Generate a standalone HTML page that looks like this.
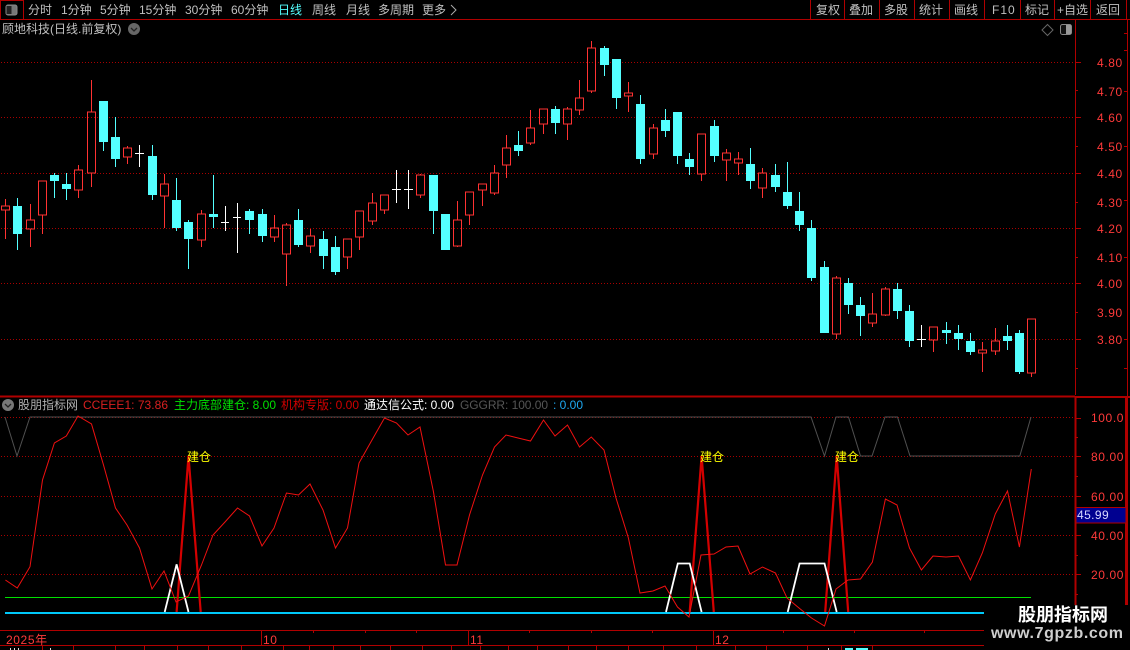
<!DOCTYPE html>
<html lang="zh">
<head>
<meta charset="utf-8">
<title>顾地科技</title>
<style>
html,body{margin:0;padding:0;background:#000;width:1130px;height:650px;overflow:hidden}
svg{display:block;position:absolute;left:0;top:0}
text{font-family:"Liberation Sans","WenQuanYi Zen Hei","Noto Sans CJK SC",sans-serif;font-size:12px}
.m text{fill:#c0c0c0}
.a text{fill:#ff3a3a;letter-spacing:.6px}
</style>
</head>
<body>
<svg width="1130" height="650" viewBox="0 0 1130 650" xmlns="http://www.w3.org/2000/svg">
<!-- frame lines -->
<g fill="none" stroke="#b00000" shape-rendering="crispEdges">
<path d="M0 19.5H1130M23.5 0V19M810.5 0V19M844.5 0V19M879.5 0V19M914.5 0V19M949.5 0V19M984.5 0V19M1020.5 0V19M1054.5 0V19M1090.5 0V19M1126.5 0V19"/>
<path d="M1075.5 20V395M1127.5 20V610"/>
<path d="M0 630.5H984M0 645.5H984M261.5 631V645M468.5 631V645M713.5 631V645"/>
<path d="M42.5 646V650M73.5 646V650M115.5 646V650M144.5 646V650M177.5 646V650M208.5 646V650M241.5 646V650M283.5 646V650M309.5 646V650M333.5 646V650M360.5 646V650M390.5 646V650M422.5 646V650M451.5 646V650M480.5 646V650M508.5 646V650M537.5 646V650M568.5 646V650M596.5 646V650M628.5 646V650M663.5 646V650M696.5 646V650M735.5 646V650M766.5 646V650M807.5 646V650M841.5 646V650M872.5 646V650"/>
<path d="M313.5 630V633M365.5 630V633M416.5 630V633M529.5 630V633M591.5 630V633M652.5 630V633M783.5 630V633M854.5 630V633M924.5 630V633"/>
<path d="M1075 62.5H1081M1075 90.5H1078M1075 117.5H1081M1075 146.5H1078M1075 173.5H1081M1075 202.5H1078M1075 228.5H1081M1075 257.5H1078M1075 283.5H1081M1075 312.5H1078M1075 339.5H1081M1075 368.5H1078M1075 418.5H1081M1075 437.5H1078M1075 456.5H1081M1075 476.5H1078M1075 496.5H1081M1075 535.5H1081M1075 555.5H1078M1075 574.5H1081M1075 594.5H1078"/>
<path d="M1124 33.5H1127M1124 50.5H1127M1124 91.5H1127M1124 146.5H1127M1124 200.5H1127M1124 257.5H1127M1124 339.5H1127M1124 368.5H1127"/>
</g>
<path d="M0 396.5H1075M1075 397H1130M1075.5 397V612M1126 397V612" fill="none" stroke="#b00000" stroke-width="2" shape-rendering="crispEdges"/>
<path d="M1 0.5H23M0.5 0V19" fill="none" stroke="#b00000" shape-rendering="crispEdges"/>
<!-- grid -->
<g fill="none" stroke="#a80000" stroke-dasharray="1 2" shape-rendering="crispEdges">
<path d="M1 62.5H1075M1 117.5H1075M1 173.5H1075M1 228.5H1075M1 283.5H1075M1 339.5H1075"/>
<path d="M1 417.5H1075M1 456.5H1075M1 496.5H1075M1 535.5H1075M1 574.5H1075"/>
</g>
<!-- toolbar left icon -->
<rect x="6" y="5" width="11" height="10" rx="2" fill="#777" stroke="#888"/>
<rect x="6.5" y="6" width="5" height="8" fill="#222"/>
<!-- toolbar text -->
<g class="m">
<text x="28" y="14">分时</text><text x="61" y="14">1分钟</text><text x="100" y="14">5分钟</text><text x="139" y="14">15分钟</text><text x="185" y="14">30分钟</text><text x="231" y="14">60分钟</text>
<text x="278" y="14" style="fill:#54ffff">日线</text>
<text x="312" y="14">周线</text><text x="346" y="14">月线</text><text x="378" y="14">多周期</text><text x="422" y="14">更多</text>
<text x="816" y="14">复权</text><text x="849" y="14">叠加</text><text x="884" y="14">多股</text><text x="919" y="14">统计</text><text x="954" y="14">画线</text><text x="992" y="14" style="letter-spacing:1px">F10</text><text x="1025" y="14">标记</text><text x="1057" y="14">+自选</text><text x="1096" y="14">返回</text>
<text x="2" y="33">顾地科技(日线.前复权)</text>
</g>
<path d="M451 5L456 10L451 15" fill="none" stroke="#aaa"/>
<circle cx="134" cy="29" r="6" fill="#666"/>
<path d="M131 28L134 31L137 28" fill="none" stroke="#222" stroke-width="1.3"/>
<path d="M1047.5 24.5L1053 30L1047.5 35.5L1042 30Z" fill="none" stroke="#666"/>
<rect x="1060.5" y="24.5" width="11" height="10" rx="2" fill="#111" stroke="#888"/>
<rect x="1066" y="25" width="5" height="9" fill="#999"/>
<!-- axis labels -->
<g class="a">
<text x="1097" y="67">4.80</text><text x="1097" y="96">4.70</text><text x="1097" y="122">4.60</text><text x="1097" y="151">4.50</text><text x="1097" y="178">4.40</text><text x="1097" y="207">4.30</text><text x="1097" y="233">4.20</text><text x="1097" y="262">4.10</text><text x="1097" y="288">4.00</text><text x="1097" y="317">3.90</text><text x="1097" y="344">3.80</text>
<text x="1091" y="422">100.0</text><text x="1091" y="461">80.00</text><text x="1091" y="501">60.00</text><text x="1091" y="540">40.00</text><text x="1091" y="579">20.00</text>
<text x="6" y="644">2025年</text><text x="263" y="644">10</text><text x="470" y="644">11</text><text x="715" y="644">12</text>
</g>
<!-- red candles -->
<path fill="none" stroke="#ff3232" shape-rendering="crispEdges" d="
M5.5 199V206M5.5 210V239M1.5 206h8v4h-8z
M30.5 204V220M30.5 229V247M26.5 220h8v9h-8z
M42.5 215V234M38.5 181h8v34h-8z
M78.5 165V170M78.5 190V198M74.5 170h8v20h-8z
M91.5 80V112M91.5 173V187M87.5 112h8v61h-8z
M127.5 146V148M127.5 157V164M123.5 148h8v9h-8z
M164.5 174V184M164.5 196V228M160.5 184h8v12h-8z
M201.5 210V214M201.5 240V247M197.5 214h8v26h-8z
M274.5 215V228M274.5 237V242M270.5 228h8v9h-8z
M286.5 223V225M286.5 254V286M282.5 225h8v29h-8z
M310.5 229V236M310.5 246V253M306.5 236h8v10h-8z
M347.5 257V269M343.5 239h8v18h-8z
M359.5 237V250M355.5 211h8v26h-8z
M372.5 193V203M372.5 221V225M368.5 203h8v18h-8z
M384.5 210V214M380.5 195h8v15h-8z
M420.5 174V175M420.5 195V198M416.5 175h8v20h-8z
M457.5 201V220M457.5 246V247M453.5 220h8v26h-8z
M469.5 215V225M465.5 192h8v23h-8z
M482.5 190V206M478.5 184h8v6h-8z
M494.5 165V173M494.5 193V195M490.5 173h8v20h-8z
M506.5 135V148M506.5 165V178M502.5 148h8v17h-8z
M530.5 110V128M530.5 143V145M526.5 128h8v15h-8z
M543.5 124V134M539.5 109h8v15h-8z
M567.5 107V109M567.5 124V140M563.5 109h8v15h-8z
M579.5 80V98M579.5 110V115M575.5 98h8v12h-8z
M591.5 41V48M591.5 91V93M587.5 48h8v43h-8z
M628.5 82V93M628.5 96V112M624.5 93h8v3h-8z
M653.5 124V128M653.5 154V159M649.5 128h8v26h-8z
M701.5 174V181M697.5 134h8v40h-8z
M726.5 149V153M726.5 160V181M722.5 153h8v7h-8z
M738.5 152V159M738.5 163V175M734.5 159h8v4h-8z
M762.5 168V173M762.5 188V198M758.5 173h8v15h-8z
M836.5 276V278M836.5 334V339M832.5 278h8v56h-8z
M872.5 293V314M872.5 323V327M868.5 314h8v9h-8z
M885.5 287V289M885.5 315V316M881.5 289h8v26h-8z
M933.5 340V352M929.5 327h8v13h-8z
M982.5 342V350M982.5 353V372M978.5 350h8v3h-8z
M995.5 328V341M995.5 351V355M991.5 341h8v10h-8z
M1031.5 373V377M1027.5 319h8v54h-8z"/>
<!-- cyan wicks -->
<path fill="none" stroke="#54ffff" shape-rendering="crispEdges" d="
M17.5 198V250M54.5 173V198M66.5 173V200M103.5 101V151M115.5 117V167M152.5 145V200M176.5 178V231M188.5 220V269M213.5 175V228M249.5 209V234M262.5 209V242M298.5 209V247M323.5 231V269M335.5 236V275M433.5 175V234M518.5 131V156M555.5 106V134M604.5 46V76M616.5 59V109M640.5 95V164M665.5 109V137M677.5 112V164M689.5 153V175M714.5 120V162M750.5 148V189M775.5 164V192M787.5 162V209M799.5 192V231M811.5 220V281M824.5 261V333M848.5 278V314M860.5 297V336M897.5 283V319M909.5 305V347M946.5 322V344M958.5 325V350M970.5 333V355M1007.5 325V350M1019.5 330V374"/>
<!-- cyan bodies -->
<path fill="#54ffff" shape-rendering="crispEdges" d="
M13 206h9v28h-9zM50 175h9v6h-9zM62 184h9v5h-9zM99 101h9v41h-9zM111 137h9v22h-9zM148 156h9v39h-9zM172 200h9v28h-9zM184 222h9v17h-9zM209 214h9v3h-9zM245 211h9v9h-9zM258 214h9v22h-9zM294 220h9v25h-9zM319 239h9v17h-9zM331 247h9v25h-9zM429 175h9v36h-9zM441 214h9v36h-9zM514 145h9v6h-9zM551 109h9v14h-9zM600 48h9v17h-9zM612 59h9v39h-9zM636 104h9v55h-9zM661 120h9v11h-9zM673 112h9v44h-9zM685 159h9v8h-9zM710 126h9v30h-9zM746 164h9v17h-9zM771 175h9v12h-9zM783 192h9v14h-9zM795 211h9v14h-9zM807 228h9v50h-9zM820 267h9v66h-9zM844 283h9v22h-9zM856 305h9v11h-9zM893 289h9v22h-9zM905 311h9v30h-9zM942 330h9v3h-9zM954 333h9v6h-9zM966 341h9v11h-9zM1003 336h9v5h-9zM1015 333h9v39h-9z"/>
<!-- white doji -->
<path fill="none" stroke="#fff" shape-rendering="crispEdges" d="M139.5 145V167M135 153.5H144M225.5 206V231M221 222.5H229M237.5 203V253M233 217.5H241M396.5 170V203M392 189.5H401M408.5 170V209M404 189.5H413M921.5 325V347M917 339.5H926"/>
<!-- indicator title -->
<circle cx="8" cy="405" r="6" fill="#777"/>
<path d="M5 404L8 407L11 404" fill="none" stroke="#222" stroke-width="1.3"/>
<text x="18" y="409" fill="#b0b0b0">股朋指标网</text>
<text x="83" y="409" fill="#d82020" textLength="85">CCEEE1: 73.86</text>
<text x="174" y="409" fill="#00e000">主力底部建仓: 8.00</text>
<text x="281" y="409" fill="#d00000">机构专版: 0.00</text>
<text x="364" y="409" fill="#fff">通达信公式: 0.00</text>
<text x="460" y="409" fill="#555" textLength="88">GGGRR: 100.00</text>
<text x="553" y="409" fill="#1ea8f0">: 0.00</text>
<!-- gray line -->
<path fill="none" stroke="#505050" d="M5 417L17 456L30 417H811L824.5 456L836 417H848.5L860.5 456H872L885 417H897.5L910 456H1019.8L1031 417"/>
<!-- green and cyan lines -->
<path d="M5 597.5H1031" stroke="#00e000" fill="none" shape-rendering="crispEdges"/>
<path d="M5 613H984" stroke="#00c8f8" stroke-width="2" fill="none" shape-rendering="crispEdges"/>
<!-- thick red spikes -->
<path fill="none" stroke="#d40000" stroke-width="2.2" d="M176.6 612L188.5 456L200.7 612M689.7 612L701.6 456L713.8 612M825.2 612L836.7 456L848.2 612"/>
<!-- white traps -->
<path fill="none" stroke="#fff" stroke-width="1.8" d="M164.7 612L176.6 564.3L188.5 612M666 612L677.8 563.5H689.7L701.6 612M787.7 612L799.6 563.5H824.5L836.7 612"/>
<!-- CCEEE1 line -->
<path fill="none" stroke="#f01010" d="M5.4 580L17.3 588L30 566.7L42.5 480L54.4 443L66.3 436L78 416L91.5 424L103.5 465L115.5 508L127 525L139.5 548L152 589L164 571L176 602L188.5 596L201.5 565L213 535L225 522L237.5 508L249.5 516L262 546L274 528L286.5 493L298.5 495L310 484L323 510L335.5 548L347.5 528L359 463L372 440L384.5 418L396.5 423L408 435L420 427L433.5 492L445.5 565L457 565L469.5 515L482.5 475L494.5 447L506 435L518 438L530.5 441L543.5 420L555 436L567.5 425L579.5 447L591.3 437L604 450L616 498L628.4 538L640 593L653 591L665 586L677.5 607L689 617L701 555L714 554L726 547L738 546L750 574L762.5 567L775.5 573L787 598L799 608L811.5 618L824.5 626L836 589L848 580L860.5 579L872.4 562L885.4 499L897 505L909.5 548L921.4 570L933 556L946 557L958.5 556L970.4 580L982.3 553L995.3 514L1007.5 491L1019.4 547L1031.3 469"/>
<!-- labels -->
<text x="187" y="461" fill="#ffff00">建仓</text>
<text x="700" y="461" fill="#ffff00">建仓</text>
<text x="835" y="461" fill="#ffff00">建仓</text>
<!-- value box -->
<rect x="1076" y="507.5" width="50" height="15.5" fill="#000090" stroke="#b00000"/>
<text x="1077" y="519" fill="#d8d8ff" style="letter-spacing:.4px">45.99</text>
<!-- bottom strip clipped glyph tops -->
<path d="M10 648h1v2h-1zM14 648h1v2h-1zM18 648h1v2h-1zM50 648h1v2h-1zM828 648h1v2h-1z" fill="#ddd"/>
<path d="M845 648h8v2h-8zM856 648h12v2h-12z" fill="#54ffff"/>
<!-- watermark -->
<rect x="984" y="610" width="146" height="40" fill="#000" opacity="0"/>
<rect x="985" y="605" width="145" height="45" fill="#000"/>
<text x="1018" y="621" fill="#fff" style="font-size:18px;font-weight:bold">股朋指标网</text>
<text x="991" y="638" fill="#cfcfcf" textLength="132" style="font-size:16px;font-weight:bold">www.7gpzb.com</text>
</svg>
</body>
</html>
